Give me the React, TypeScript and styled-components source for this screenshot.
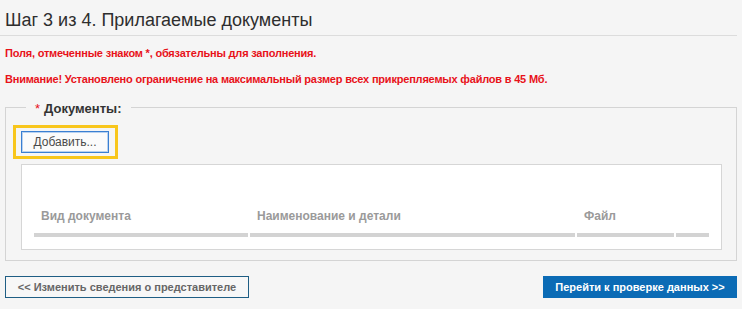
import React from "react"
import styled, { createGlobalStyle } from "styled-components";

const GlobalStyle = createGlobalStyle`
  body {
    margin: 0;
    background: #f5f5f5;
    font-family: "Liberation Sans", Arial, sans-serif;
  }
`

const Page = styled.div`
  width: 742px;
  box-sizing: border-box;
  padding: 0 5px;
`

const Title = styled.h1`
  margin: 0 0 0 -5px;
  padding: 9px 0 4px 5px;
  font-size: 18px;
  line-height: 22px;
  font-weight: normal;
  color: #2e2e2e;
  border-bottom: 1px solid #dcdcdc;
`

interface withSpacing {
    top: number
}

const Notice = styled.p<withSpacing>`
  margin: ${({top}) => top}px 0 0;
  font-size: 11px;
  line-height: 14px;
  font-weight: bold;
  letter-spacing: -0.2px;
  color: #e8121a;
`

const Fieldset = styled.fieldset`
  margin: 11px 0 0;
  padding: 0 8px 10px 7px;
  border: 1px solid #d4d4d4;
  min-width: 0;
`

const Legend = styled.legend`
  margin-left: 13px;
  padding: 4px 9px 0;
  font-size: 13px;
  line-height: 16px;
  font-weight: bold;
  color: #333;
`

const Star = styled.span`
  color: #e8121a;
  margin-right: 4px;
  font-weight: normal;
`

const FocusRing = styled.div`
  display: flex;
  width: fit-content;
  margin-top: 8px;
  padding: 3px 6px 3px 5px;
  border: 3px solid #f8c61c;
`

const AddButton = styled.button`
  width: 88px;
  height: 22px;
  padding: 0;
  box-sizing: border-box;
  border: 1px solid #3a7fd2;
  box-shadow: inset 0 0 0 1px #b9d2f0;
  background: #fbfbfb;
  font-family: inherit;
  font-size: 12px;
  color: #4a4a4a;
`

const TableBox = styled.div`
  margin: 5px 6px 0 8px;
  padding: 33px 10px 10px;
  background: #fff;
  border: 1px solid #d6d6d6;
`

const Table = styled.table`
  border-spacing: 2px;
  table-layout: fixed;
  width: 679px;
`

interface withWidth {
    w: number
}

const Th = styled.th<withWidth>`
  box-sizing: border-box;
  width: ${({w}) => w}px;
  padding: 9px 4px 10px 7px;
  text-align: left;
  font-size: 12px;
  line-height: 14px;
  font-weight: bold;
  color: #9a9a9a;
  border-bottom: 4px solid #d3d3d3;
  white-space: nowrap;
  overflow: hidden;
`

const Footer = styled.div`
  display: flex;
  justify-content: space-between;
  margin-top: 15px;
`

interface withPrimary {
    primary?: boolean
}

const NavButton = styled.button<withPrimary>`
  height: 22px;
  box-sizing: border-box;
  padding: 0;
  font-family: inherit;
  font-size: 11px;
  font-weight: bold;
  width: ${({primary}) => primary ? 194 : 244}px;
  border: 1px solid ${({primary}) => primary ? '#0b6bb5' : '#1f5e84'};
  background: ${({primary}) => primary ? '#0b6bb5' : '#f7f7f7'};
  color: ${({primary}) => primary ? '#fff' : '#666'};
`

const columns = [
    {title: 'Вид документа', w: 214},
    {title: 'Наименование и детали', w: 325},
    {title: 'Файл', w: 97},
    {title: '', w: 33},
]

const App = () => (
    <Page>
        <GlobalStyle/>
        <Title>Шаг 3 из 4. Прилагаемые документы</Title>
        <Notice top={10}>Поля, отмеченные знаком *, обязательны для заполнения.</Notice>
        <Notice top={12}>Внимание! Установлено ограничение на максимальный размер всех прикрепляемых файлов в 45 Мб.</Notice>
        <Fieldset>
            <Legend><Star>*</Star>Документы:</Legend>
            <FocusRing>
                <AddButton>Добавить...</AddButton>
            </FocusRing>
            <TableBox>
                <Table>
                    <thead>
                    <tr>
                        {columns.map((c, i) => <Th key={i} w={c.w}>{c.title}</Th>)}
                    </tr>
                    </thead>
                </Table>
            </TableBox>
        </Fieldset>
        <Footer>
            <NavButton>&lt;&lt; Изменить сведения о представителе</NavButton>
            <NavButton primary>Перейти к проверке данных &gt;&gt;</NavButton>
        </Footer>
    </Page>
)

export default App
